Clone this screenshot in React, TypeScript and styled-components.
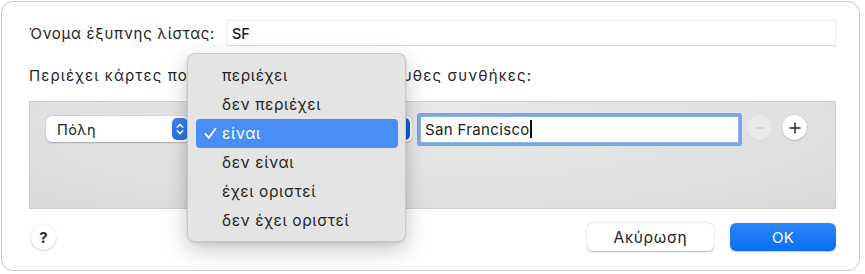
import React from "react";
import styled, { createGlobalStyle } from "styled-components";

const Global = createGlobalStyle`
  html, body { margin: 0; padding: 0; background: #ffffff; }
  body { font-family: Inter, "Noto Sans", "Liberation Sans", sans-serif; -webkit-font-smoothing: antialiased; }
  * { box-sizing: border-box; }
`;

const Window = styled.div`
  position: relative;
  margin: 1px 0 0 1px;
  width: 859px;
  height: 270px;
  border: 1px solid #cbcbcb;
  border-radius: 12px;
  background: #ffffff;
  padding: 18px 23px 0 27px;
  color: #242424;
  font-size: 15px;
`;

const NameRow = styled.div`
  display: grid;
  grid-template-columns: 198px 1fr;
  align-items: center;
  height: 26px;
`;

const Label = styled.span`
  font-size: 15px;
  color: #262626;
  letter-spacing: 0.7px;
  white-space: nowrap;
`;

const NameField = styled.div`
  height: 26px;
  background: #fff;
  border: 1px solid #f0f0f0;
  border-bottom: 1px solid #dcdcdc;
  box-shadow: 0 0 1px rgba(0, 0, 0, 0.12);
  display: flex;
  align-items: center;
  padding-left: 4px;
  font-size: 14.5px;
  font-weight: 500;
  color: #1f1f1f;
`;

const ConditionsLabel = styled.div`
  margin-top: 21px;
  height: 17px;
  display: flex;
  align-items: center;
  font-size: 15px;
  letter-spacing: 1.15px;
  white-space: nowrap;
  color: #262626;
`;

const RuleBox = styled.div`
  margin-top: 17px;
  width: 807px;
  height: 108px;
  border: 1px solid #cfcfcf;
  background: radial-gradient(ellipse at 50% 20%, #e9e9e9 0%, #e2e2e2 55%, #d9d9d9 100%);
  padding: 13px 0 0 16px;
`;

const RuleRow = styled.div`
  display: flex;
  align-items: center;
  height: 28px;
`;

const Popup = styled.div<{ $w: number }>`
  width: ${(p) => p.$w}px;
  height: 26px;
  background: #ffffff;
  border-radius: 6px;
  box-shadow: 0 0.5px 1.5px rgba(0, 0, 0, 0.25);
  display: flex;
  align-items: center;
  justify-content: space-between;
  padding: 0 2px 0 11px;
  font-size: 14.5px;
  letter-spacing: 0.4px;
  color: #222;
`;

const Stepper = styled.div<{ $dark?: boolean }>`
  width: 16px;
  height: 22px;
  border-radius: 5px;
  background: ${(p) =>
    p.$dark ? "linear-gradient(#1668e0, #0a5ad2)" : "linear-gradient(#3b82ef, #2a70e6)"};
  display: flex;
  align-items: center;
  justify-content: center;
`;

const SearchField = styled.div`
  margin-left: 8px;
  width: 319px;
  height: 27px;
  background: #fff;
  border: 1px solid #8fb4ee;
  box-shadow: 0 0 0 3px rgba(106, 154, 234, 0.85);
  border-radius: 1px;
  display: flex;
  align-items: center;
  padding-left: 4px;
  font-size: 15px;
  letter-spacing: 0.35px;
  color: #222;
`;

const Caret = styled.span`
  display: inline-block;
  width: 1.5px;
  height: 18px;
  background: #111;
  margin-left: 0.5px;
`;

const RoundButton = styled.div<{ $disabled?: boolean }>`
  width: 25px;
  height: 25px;
  border-radius: 50%;
  margin-top: -3px;
  background: ${(p) => (p.$disabled ? "#e9e9e9" : "#ffffff")};
  box-shadow: ${(p) =>
    p.$disabled ? "0 0.5px 1px rgba(0,0,0,0.08)" : "0 0.5px 1.5px rgba(0,0,0,0.3)"};
  display: flex;
  align-items: center;
  justify-content: center;
  flex-shrink: 0;
`;

const Footer = styled.div`
  margin-top: 14px;
  display: flex;
  align-items: center;
  padding-left: 2px;
`;

const HelpButton = styled.div`
  width: 25px;
  height: 25px;
  border-radius: 50%;
  background: #fff;
  box-shadow: 0 0.5px 2px rgba(0, 0, 0, 0.3);
  display: flex;
  align-items: center;
  justify-content: center;
  font-size: 15px;
  font-weight: 700;
  color: #2a2a2a;
`;

const Spacer = styled.div`
  flex: 1;
`;

const Button = styled.div<{ $primary?: boolean; $w: number }>`
  width: ${(p) => p.$w}px;
  height: 28px;
  border-radius: 6px;
  display: flex;
  align-items: center;
  justify-content: center;
  font-size: ${(p) => (p.$primary ? 15 : 15.5)}px;
  letter-spacing: ${(p) => (p.$primary ? 0.3 : 0.7)}px;
  color: ${(p) => (p.$primary ? "#ffffff" : "#222")};
  background: ${(p) => (p.$primary ? "linear-gradient(#2a86fa, #0a6df4)" : "#ffffff")};
  box-shadow: ${(p) =>
    p.$primary ? "0 0.5px 1px rgba(0,0,0,0.2)" : "0 0.5px 1.5px rgba(0,0,0,0.3)"};
  margin-left: ${(p) => (p.$primary ? 16 : 0)}px;
`;

const Menu = styled.div`
  position: absolute;
  left: 185px;
  top: 51px;
  width: 219px;
  height: 189px;
  border-radius: 8px;
  background: #e4e4e4;
  border: 0.5px solid rgba(0, 0, 0, 0.12);
  box-shadow: 0 8px 22px rgba(0, 0, 0, 0.22), 0 1px 3px rgba(0, 0, 0, 0.12);
  padding: 7px 7px 0 8px;
`;

const MenuItem = styled.div<{ $active?: boolean }>`
  position: relative;
  height: 29px;
  display: flex;
  align-items: center;
  padding-left: 26px;
  border-radius: 4px;
  font-size: 15.5px;
  letter-spacing: 0.6px;
  white-space: nowrap;
  color: ${(p) => (p.$active ? "#ffffff" : "#262626")};
  background: ${(p) => (p.$active ? "#488ef6" : "transparent")};
`;

const Check = styled.svg`
  position: absolute;
  left: 8px;
  top: 8px;
`;

const Chevrons = () => (
  <svg width="10" height="14" viewBox="0 0 10 14">
    <path d="M2.2 5.2 L5 2.4 L7.8 5.2" stroke="#fff" strokeWidth="1.5" fill="none" strokeLinecap="round" strokeLinejoin="round" />
    <path d="M2.2 8.8 L5 11.6 L7.8 8.8" stroke="#fff" strokeWidth="1.5" fill="none" strokeLinecap="round" strokeLinejoin="round" />
  </svg>
);

const items = ["περιέχει", "δεν περιέχει", "είναι", "δεν είναι", "έχει οριστεί", "δεν έχει οριστεί"];

export default function App() {
  return (
    <>
      <Global />
      <Window>
        <NameRow>
          <Label>Όνομα έξυπνης λίστας:</Label>
          <NameField>SF</NameField>
        </NameRow>
        <ConditionsLabel>Περιέχει κάρτες που ταιριάζουν με τις ακόλουθες συνθήκες:</ConditionsLabel>
        <RuleBox>
          <RuleRow>
            <Popup $w={144}>
              <span>Πόλη</span>
              <Stepper>
                <Chevrons />
              </Stepper>
            </Popup>
            <Popup $w={212} style={{ marginLeft: 10 }}>
              <span>είναι</span>
              <Stepper $dark>
                <Chevrons />
              </Stepper>
            </Popup>
            <SearchField>
              San Francisco
              <Caret />
            </SearchField>
            <RoundButton $disabled style={{ marginLeft: 8 }}>
              <svg width="14" height="14" viewBox="0 0 14 14">
                <path d="M2.5 7 H11.5" stroke="#cfcfcf" strokeWidth="1.4" strokeLinecap="round" />
              </svg>
            </RoundButton>
            <RoundButton style={{ marginLeft: 10 }}>
              <svg width="14" height="14" viewBox="0 0 14 14">
                <path d="M2 7 H12 M7 2 V12" stroke="#2a2a2a" strokeWidth="1.5" strokeLinecap="round" />
              </svg>
            </RoundButton>
          </RuleRow>
        </RuleBox>
        <Footer>
          <HelpButton>?</HelpButton>
          <Spacer />
          <Button $w={127}>Ακύρωση</Button>
          <Button $w={106} $primary>
            OK
          </Button>
        </Footer>
        <Menu>
          {items.map((t) => (
            <MenuItem key={t} $active={t === "είναι"}>
              {t === "είναι" && (
                <Check width="13" height="13" viewBox="0 0 13 13">
                  <path d="M1.5 7 L4.8 10.8 L11.5 1.8" stroke="#fff" strokeWidth="1.9" fill="none" strokeLinecap="round" strokeLinejoin="round" />
                </Check>
              )}
              {t}
            </MenuItem>
          ))}
        </Menu>
      </Window>
    </>
  );
}
